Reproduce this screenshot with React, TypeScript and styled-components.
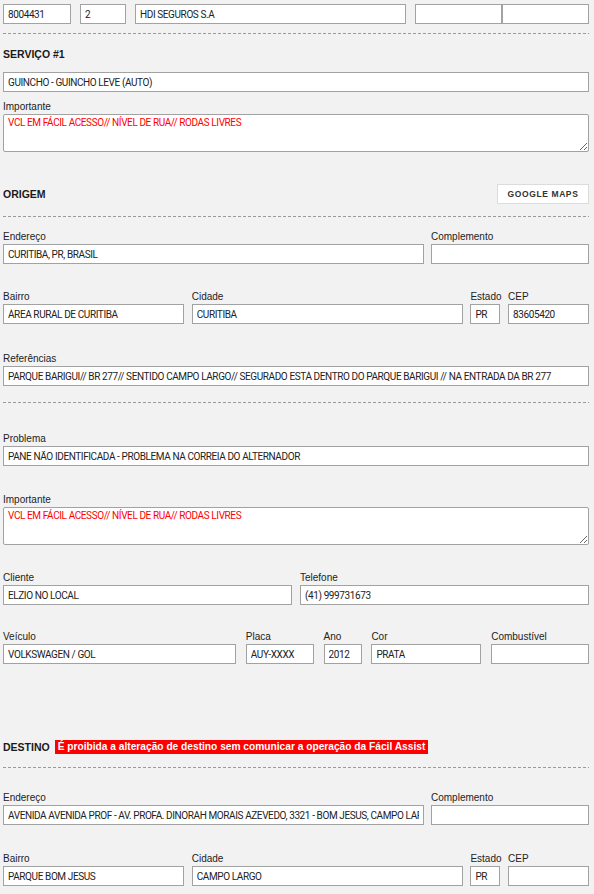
import React from "react"
import styled, { createGlobalStyle } from "styled-components"

const GlobalStyle = createGlobalStyle`
  html, body {
    margin: 0;
    padding: 0;
    background: #f2f2f2;
  }
  body {
    font-family: "Liberation Sans", Arial, sans-serif;
    color: #222;
  }
`

const Page = styled.div`
  width: 594px;
  box-sizing: border-box;
  padding: 0 5px 0 3px;
  overflow: hidden;
`

const Divider = styled.div<{ $mt: number }>`
  height: 1px;
  margin-top: ${p => p.$mt}px;
  background: repeating-linear-gradient(90deg, #9a9a9a 0 3px, transparent 3px 5px);
`

const SectionHeader = styled.div<{ $mt: number }>`
  display: flex;
  align-items: center;
  justify-content: space-between;
  height: 20px;
  margin-top: ${p => p.$mt}px;
`

const TitleGroup = styled.div`
  display: flex;
  align-items: center;
`

const SectionTitle = styled.div`
  font-weight: bold;
  font-size: 10.5px;
  color: #1a1a1a;
  line-height: 15px;
`

const WarningBadge = styled.span`
  margin-left: 5px;
  background: #ff0000;
  color: #fff;
  font-weight: bold;
  font-size: 10.2px;
  height: 14px;
  line-height: 14px;
  padding: 0 3px;
  white-space: nowrap;
`

const MapsButton = styled.button`
  width: 92px;
  height: 20px;
  box-sizing: border-box;
  background: #fff;
  border: 1px solid #dcdcdc;
  font-family: "Liberation Sans", Arial, sans-serif;
  font-weight: bold;
  font-size: 8.5px;
  letter-spacing: 0.6px;
  color: #333;
  padding: 0;
  cursor: pointer;
`

const Row = styled.div<{ $cols: string; $gap?: number; $mt?: number }>`
  display: grid;
  grid-template-columns: ${p => p.$cols};
  column-gap: ${p => p.$gap ?? 7}px;
  margin-top: ${p => p.$mt ?? 0}px;
  align-items: end;
`

const Field = styled.div`
  display: flex;
  flex-direction: column;
  min-width: 0;
`

const Label = styled.label`
  display: block;
  font-size: 10px;
  line-height: 15px;
  height: 15px;
  color: #222;
  white-space: nowrap;
`

const valueFont = `
  font-family: Roboto, "Liberation Sans", Arial, sans-serif;
  font-size: 10px;
  letter-spacing: -0.4px;
  word-spacing: 0;
`

const TextInput = styled.input`
  display: block;
  width: 100%;
  height: 20px;
  box-sizing: border-box;
  margin: 0;
  border: 1px solid #a2a2a2;
  border-radius: 0;
  background: #fff;
  padding: 0 4px;
  ${valueFont}
  color: #222;
  outline: none;
`

const TextArea = styled.textarea`
  display: block;
  width: 100%;
  height: 38px;
  box-sizing: border-box;
  margin: 0;
  border: 1px solid #a2a2a2;
  border-radius: 2px;
  background: #fff;
  padding: 2px 4px;
  ${valueFont}
  color: #ff0000;
  outline: none;
  resize: vertical;
`

const PairGroup = styled.div`
  display: grid;
  grid-template-columns: 1fr 1fr;
`

type InputFieldProps = {
  label: string
  value?: string
}

const InputField = ({ label, value = "" }: InputFieldProps) => (
  <Field>
    <Label>{label}</Label>
    <TextInput readOnly value={value} />
  </Field>
)

const important = "VCL EM FÁCIL ACESSO// NÍVEL DE RUA// RODAS LIVRES"

export default function App() {
  return (
    <Page>
      <GlobalStyle />

      <Row $cols="68px 46px 271px 1fr" $gap={9} $mt={4}>
        <TextInput readOnly value="8004431" />
        <TextInput readOnly value="2" />
        <TextInput readOnly value="HDI SEGUROS S.A" />
        <PairGroup>
          <TextInput readOnly value="" />
          <TextInput readOnly value="" />
        </PairGroup>
      </Row>

      <Divider $mt={9} />

      <SectionHeader $mt={10}>
        <SectionTitle>SERVIÇO #1</SectionTitle>
      </SectionHeader>

      <Row $cols="1fr" $mt={8}>
        <TextInput readOnly value="GUINCHO - GUINCHO LEVE (AUTO)" />
      </Row>
      <Row $cols="1fr" $mt={7}>
        <Field>
          <Label>Importante</Label>
          <TextArea readOnly value={important} />
        </Field>
      </Row>

      <SectionHeader $mt={32}>
        <SectionTitle>ORIGEM</SectionTitle>
        <MapsButton>GOOGLE MAPS</MapsButton>
      </SectionHeader>

      <Divider $mt={12} />

      <Row $cols="421px 1fr" $mt={12}>
        <InputField label="Endereço" value="CURITIBA, PR, BRASIL" />
        <InputField label="Complemento" />
      </Row>
      <Row $cols="181px 271px 30px 1fr" $gap={7.7} $mt={25}>
        <InputField label="Bairro" value="ÁREA RURAL DE CURITIBA" />
        <InputField label="Cidade" value="CURITIBA" />
        <InputField label="Estado" value="PR" />
        <InputField label="CEP" value="83605420" />
      </Row>
      <Row $cols="1fr" $mt={27}>
        <InputField
          label="Referências"
          value="PARQUE BARIGUI// BR 277// SENTIDO CAMPO LARGO// SEGURADO ESTÁ DENTRO DO PARQUE BARIGUI // NA ENTRADA DA BR 277"
        />
      </Row>

      <Divider $mt={16} />

      <Row $cols="1fr" $mt={28}>
        <InputField label="Problema" value="PANE NÃO IDENTIFICADA - PROBLEMA NA CORREIA DO ALTERNADOR" />
      </Row>
      <Row $cols="1fr" $mt={26}>
        <Field>
          <Label>Importante</Label>
          <TextArea readOnly value={important} />
        </Field>
      </Row>
      <Row $cols="1fr 1fr" $gap={8} $mt={25}>
        <InputField label="Cliente" value="ELZIO NO LOCAL" />
        <InputField label="Telefone" value="(41) 999731673" />
      </Row>
      <Row $cols="233px 68px 38px 110px 1fr" $gap={9.8} $mt={24}>
        <InputField label="Veículo" value="VOLKSWAGEN / GOL" />
        <InputField label="Placa" value="AUY-XXXX" />
        <InputField label="Ano" value="2012" />
        <InputField label="Cor" value="PRATA" />
        <InputField label="Combustível" />
      </Row>

      <SectionHeader $mt={73}>
        <TitleGroup>
          <SectionTitle>DESTINO</SectionTitle>
          <WarningBadge>É proibida a alteração de destino sem comunicar a operação da Fácil Assist</WarningBadge>
        </TitleGroup>
      </SectionHeader>

      <Divider $mt={10} />

      <Row $cols="421px 1fr" $mt={22}>
        <InputField
          label="Endereço"
          value="AVENIDA AVENIDA PROF - AV. PROFA. DINORAH MORAIS AZEVEDO, 3321 - BOM JESUS, CAMPO LARGO"
        />
        <InputField label="Complemento" />
      </Row>
      <Row $cols="181px 271px 30px 1fr" $gap={7.7} $mt={26}>
        <InputField label="Bairro" value="PARQUE BOM JESUS" />
        <InputField label="Cidade" value="CAMPO LARGO" />
        <InputField label="Estado" value="PR" />
        <InputField label="CEP" />
      </Row>
    </Page>
  )
}
